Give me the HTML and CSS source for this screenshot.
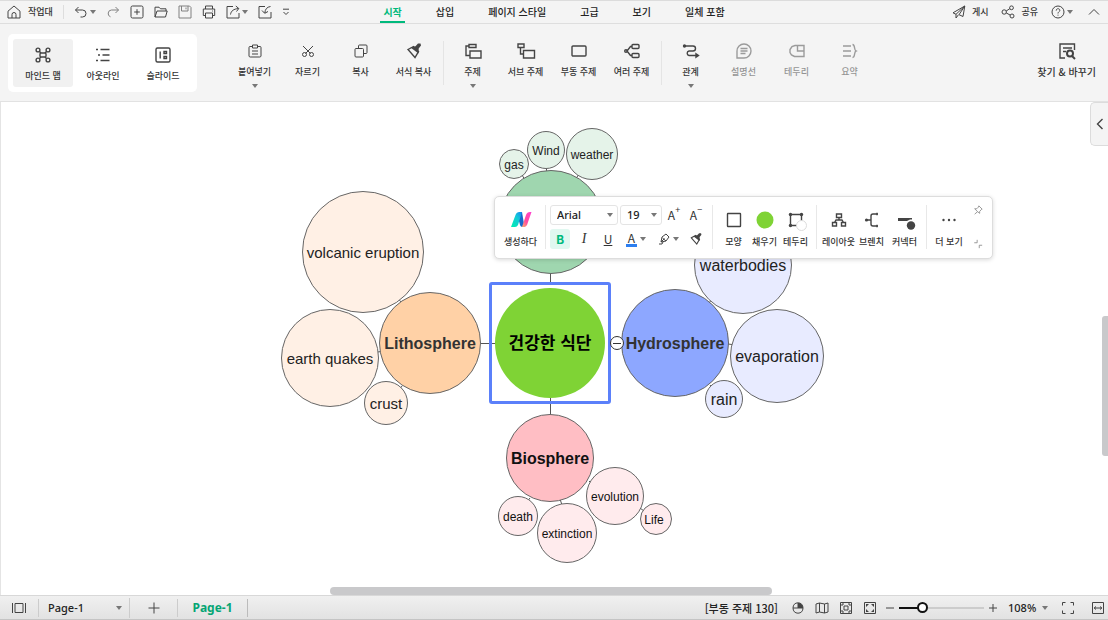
FILE: index.html
```html
<!DOCTYPE html>
<html lang="ko">
<head>
<meta charset="utf-8">
<meta name="viewport" content="width=device-width, initial-scale=1">
<title>마인드 맵</title>
<link rel="stylesheet" href="styles.css">
</head>
<body>
<header class="topbar">
  <div class="quick">
    <button class="home"><svg class="i14" viewBox="0 0 14 14"><path d="M1 6.2 7 1l6 5.2V13H1zM5 13V9.500a2 2 0 0 1 4 0V13"/></svg>작업대</button>
    <span class="bar-sep"></span>
    <button class="caret-btn" aria-label="실행 취소"><svg class="i14" viewBox="0 0 14 14"><path d="M4.500 2 1.500 5l3 3M1.500 5h7a3.500 3.500 0 0 1 0 7H6.500"/></svg><span class="caret"></span></button>
    <button class="faded" aria-label="다시 실행"><svg class="i14" viewBox="0 0 14 14"><path d="M9.500 2l3 3-3 3M12.500 5h-7a3.500 3.500 0 0 0-1 6.800"/></svg></button>
    <button aria-label="새로 만들기"><svg class="i14" viewBox="0 0 14 14"><rect x="1" y="1" width="12" height="12" rx="1.500"/><path d="M7 4.200v5.600M4.200 7h5.600"/></svg></button>
    <button aria-label="열기"><svg class="i14" viewBox="0 0 14 14"><path d="M1 12V2.200h4l1.500 1.600H12V6M1 12 3 6h10.200L11.500 12z"/></svg></button>
    <button class="faded" aria-label="저장"><svg class="i14" viewBox="0 0 14 14"><path d="M1 1h10.500L13 2.500V13H1zM3.500 1v5h6.500V1M8 2.500v1.800"/></svg></button>
    <button aria-label="인쇄"><svg class="i14" viewBox="0 0 14 14"><path d="M3.500 4V1h7v3M3.500 10.500H1.300V4h11.400v6.500h-2.200M3.500 8h7v5h-7zM10.200 6h.8"/></svg></button>
    <button class="caret-btn" aria-label="내보내기"><svg class="i14" viewBox="0 0 14 14"><path d="M7 1.500H1V13h12V8M4.500 9.500C5 6 7.500 4 12.500 3.500M9.800 1l3 2.500-2.300 3"/></svg><span class="caret"></span></button>
    <button aria-label="가져오기"><svg class="i14" viewBox="0 0 14 14"><path d="M7 1.500H1V13h12V7M12.500 1.500C9 2 7.200 4 6.800 8M4 5.500 6.700 8.300 10 6.500"/></svg></button>
    <button aria-label="더 보기"><svg class="i8" viewBox="0 0 8 8"><path d="M1 1.200h6M1.500 4 4 6.500 6.500 4"/></svg></button>
  </div>
  <nav class="tabs">
    <button class="tab active">시작</button><button class="tab">삽입</button><button class="tab">페이지 스타일</button><button class="tab">고급</button><button class="tab">보기</button><button class="tab">일체 포함</button>
  </nav>
  <div class="account">
    <button class="wide"><svg class="i14" viewBox="0 0 14 14"><path d="M12.800 1 1 7.800l3 1.500zM12.800 1l-1.800 10.500-4-1.800zM4 9.300V13l2.500-3.300"/></svg>게시</button>
    <button class="wide"><svg class="i14" viewBox="0 0 14 14"><circle cx="3.200" cy="7" r="2.200"/><circle cx="10.500" cy="2.800" r="1.900"/><circle cx="11" cy="11" r="2"/><path d="M5.200 6 8.800 3.700M5.200 7.900l4 2.200"/></svg>공유</button>
    <button class="caret-btn help" aria-label="도움말"><svg class="i14" viewBox="0 0 14 14"><circle cx="7" cy="7" r="6"/><path d="M5.200 5.600C5.200 3 9 3.200 8.800 5.500 8.700 6.800 7 6.800 7 8.500M7 9.700v.9"/></svg><span class="caret"></span></button>
    <button aria-label="접기"><svg class="i12" viewBox="0 0 12 12"><path d="M1 8.500 6 3.500l5 5"/></svg></button>
  </div>
</header>

<section class="ribbon">
  <div class="views">
    <button class="view active"><svg class="i18" viewBox="0 0 18 18"><g class="bold"><rect x="6" y="7" width="6" height="4" rx="1"/><circle cx="4" cy="4" r="1.900"/><circle cx="14" cy="4" r="1.900"/><circle cx="4" cy="14" r="1.900"/><circle cx="14" cy="14" r="1.900"/><path d="M5.500 5.500 7 7M12.500 5.500 11 7M5.500 12.500 7 11M12.500 12.500 11 11"/></g></svg>마인드 맵</button>
    <button class="view"><svg class="i18" viewBox="0 0 18 18"><path class="bold" d="M2 3.500h2M6.500 3.500h9M4 9h2M8.500 9h7M2 14.500h2M6.500 14.500h9"/></svg>아웃라인</button>
    <button class="view"><svg class="i18" viewBox="0 0 18 18"><g class="bold"><rect x="2" y="2" width="14" height="14" rx="1.500"/><path d="M6.200 5.500v7M10 5.500h2.500v2H10zM10 10.500h2.500v2H10z"/></g></svg>슬라이드</button>
  </div>
  <div class="tools">
    <button class="tool"><svg class="i18" viewBox="0 0 18 18"><path d="M6.500 4.500H4A1 1 0 0 0 3 5.500v8.500A1.200 1.200 0 0 0 4.200 15h9.600a1.200 1.200 0 0 0 1.200-1V5.500a1 1 0 0 0-1-1h-2.500M6.500 3h5v3h-5zM6 9h6M6 12h6"/></svg>붙여넣기<span class="caret"></span></button>
    <button class="tool"><svg class="i18" viewBox="0 0 18 18"><path d="M4 4l7.500 7.500M14 4 6.500 11.500"/><circle cx="5.500" cy="12.500" r="2"/><circle cx="12.500" cy="12.500" r="2"/></svg>자르기</button>
    <button class="tool"><svg class="i18" viewBox="0 0 18 18"><rect x="3" y="6.500" width="8.500" height="8.500" rx="1"/><path d="M6.500 6.500V4a1 1 0 0 1 1-1H14a1 1 0 0 1 1 1v6.500a1 1 0 0 1-1 1h-2.500"/></svg>복사</button>
    <button class="tool"><svg class="i18" viewBox="0 0 18 18"><path class="bold" d="M3 7.500 8.500 4.500l5 5L10 15.500z"/><path class="solid" d="m5.500 5.500 5-1.200 2.500-2.800h2.500l.5 2-2.300 3-.2 5z"/></svg>서식 복사</button>
  </div>
  <span class="tool-sep"></span>
  <div class="tools">
    <button class="tool"><svg class="i18" viewBox="0 0 18 18"><path class="bold" d="M5 2.500h7v3H5zM6 9h11v7H6zM5 4H2v9.500h4"/></svg>주제<span class="caret"></span></button>
    <button class="tool"><svg class="i18" viewBox="0 0 18 18"><path class="bold" d="M1 2h6v3.500H1zM6.500 8.500h11V16h-11zM3.500 5.500V12h3"/></svg>서브 주제</button>
    <button class="tool"><svg class="i18" viewBox="0 0 18 18"><rect class="bold" x="2" y="4" width="14" height="10" rx="1"/></svg>부동 주제</button>
    <button class="tool"><svg class="i18" viewBox="0 0 18 18"><g class="bold"><rect x="9" y="2.500" width="7" height="4" rx="1"/><rect x="9" y="11.500" width="7" height="4" rx="1"/><circle cx="3" cy="9" r="1.300"/><path d="M9 4.500H7.500L4 9l3.500 4.500H9"/></g></svg>여러 주제</button>
  </div>
  <span class="tool-sep"></span>
  <div class="tools">
    <button class="tool"><svg class="i18" viewBox="0 0 18 18"><path class="bold" d="M2 4h9a2.300 2.300 0 0 1 0 5H7a2.300 2.300 0 0 0 0 4.500h9M14 11.800l2.500 1.700-2.500 1.700z"/><circle class="solid" cx="2.500" cy="4" r="1.700"/></svg>관계<span class="caret"></span></button>
    <button class="tool" disabled><svg class="i18" viewBox="0 0 18 18"><path class="bold" d="M2 16V9a7 7 0 1 1 7 7zM5.500 6.500h7M5.500 9h7M5.500 11.500h5"/></svg>설명선</button>
    <button class="tool" disabled><svg class="i18" viewBox="0 0 18 18"><path class="bold" d="M7 3.500h9v11H6.500L3.500 13 2 10.500v-3L4 4.500zM9.500 3.500v5.500H16"/></svg>테두리</button>
    <button class="tool" disabled><svg class="i18" viewBox="0 0 18 18"><path class="bold" d="M2 4h8M2 9h8M2 14h8M11.500 2.500c3 0 1.200 5.500 3.500 6.500-2.300 1-.5 6.500-3.500 6.500"/></svg>요약</button>
  </div>
  <button class="tool find"><svg class="i18" viewBox="0 0 18 18"><path class="bold" d="M7 16H2V2h14.500v6M5 6h9M5 9.500h3"/><circle class="heavy" cx="12" cy="11.500" r="3"/><path class="heavy" d="m14 14 3 3"/></svg>찾기 &amp; 바꾸기</button>
</section>

<main class="canvas">
  <svg class="links" width="1108" height="493"><path d="M550.500 171v9M550.500 302v10M481 241.500h8M550.500 171v12M611 241.500h8M481 241.500h15M550.500 296v16M395 193l12 14M378 250l3-.5M402 284l-7 10M522 73l3 5M546.500 64v5M579 72l-4 6M709 201l7-9M728 242l4 .5M710 283l4 5M530 396l-4 5M560 397l2 6M589 379l3 3M640 406l4 3"/></svg>
  <div class="node n-volcanic peach">volcanic eruption</div>
  <div class="node n-earth peach">earth quakes</div>
  <div class="node n-crust peach">crust</div>
  <div class="node n-litho hub">Lithosphere</div>
  <div class="node n-gas mint">gas</div>
  <div class="node n-wind mint">Wind</div>
  <div class="node n-weather mint">weather</div>
  <div class="node n-atmo"></div>
  <div class="node n-water lilac">waterbodies</div>
  <div class="node n-evap lilac">evaporation</div>
  <div class="node n-rain lilac">rain</div>
  <div class="node n-hydro hub">Hydrosphere</div>
  <div class="node n-death pink">death</div>
  <div class="node n-extinct pink">extinction</div>
  <div class="node n-evol pink">evolution</div>
  <div class="node n-life pink">Life</div>
  <div class="node n-bio hub">Biosphere</div>
  <div class="selection"><div class="center-topic">건강한 식단</div></div>
  <button class="collapse" aria-label="하위 주제 접기"></button>

  <div class="float">
    <button class="fitem ai"><svg width="22" height="18" viewBox="0 0 22 18"><defs><linearGradient id="teal" x1="0" y1="1" x2="1" y2="0"><stop offset="0" stop-color="#00f0b0"/><stop offset=".6" stop-color="#12c8d8"/><stop offset="1" stop-color="#1684f5"/></linearGradient><linearGradient id="rose" x1="1" y1="0" x2="0" y2="1"><stop offset="0" stop-color="#ff3fd0"/><stop offset=".6" stop-color="#ff4d9d"/><stop offset="1" stop-color="#ffb36b"/></linearGradient></defs><path fill="#1668cc" d="M9 1h3l2.500 15h-2q-2 0-2.500-2L8 6z"/><path fill="url(#teal)" d="M1 16 5.500 4q1-3 4-3H12L8 14q-1 2-3 2z"/><path fill="url(#rose)" d="M12 16 16 4q1-3 4-3h1.500L17 14q-1 2-3 2z"/></svg>생성하다</button>
    <span class="fsep"></span>
    <div class="format">
      <div class="frow">
        <span class="pick family"><select aria-label="글꼴"><option>Arial</option></select></span>
        <span class="pick size"><select aria-label="글꼴 크기"><option>19</option></select></span>
        <button class="fbtn letter">A<sup>+</sup></button>
        <button class="fbtn letter">A<sup>−</sup></button>
      </div>
      <div class="frow second">
        <button class="fbtn on"><b>B</b></button>
        <button class="fbtn"><i>I</i></button>
        <button class="fbtn"><u>U</u></button>
        <button class="fbtn more"><span class="ink">A</span><span class="caret"></span></button>
        <button class="fbtn more" aria-label="강조 색"><svg class="i12" viewBox="0 0 12 12"><path d="M1 11h3l1-2M3 9l1-5 4-3 3 3-3 4-5 1zM3 9l3.500-3.500M4.500 5 8 8"/></svg><span class="caret"></span></button>
        <button class="fbtn" aria-label="서식 복사"><svg class="i14" viewBox="0 0 18 18"><path class="bold" d="M3 7.500 8.500 4.500l5 5L10 15.500z"/><path class="solid" d="m5.500 5.500 5-1.200 2.500-2.800h2.500l.5 2-2.300 3-.2 5z"/></svg></button>
      </div>
    </div>
    <span class="fsep"></span>
    <div class="fgroup">
      <button class="fitem"><svg class="i18" viewBox="0 0 18 18"><rect class="bold" x="2.500" y="2.500" width="13" height="13" rx=".5"/></svg>모양</button>
      <button class="fitem"><svg class="i18" viewBox="0 0 18 18"><circle cx="9" cy="9" r="8.500" class="fill-dot"/></svg>채우기</button>
      <button class="fitem"><svg class="i18" viewBox="0 0 18 18"><path class="bold" d="M3.500 3.500h11v11h-11z"/><g class="solid"><circle cx="3.500" cy="3.500" r="1.700"/><circle cx="14.500" cy="3.500" r="1.700"/><circle cx="3.500" cy="14.500" r="1.700"/></g><circle cx="14.500" cy="14.500" r="5" class="blank-dot"/></svg>테두리</button>
    </div>
    <span class="fsep"></span>
    <div class="fgroup broad">
      <button class="fitem"><svg class="i18" viewBox="0 0 18 18"><path class="bold" d="M6.500 3h5v3.500h-5zM2.500 11.500h4V15h-4zM11.500 11.500h4V15h-4zM9 6.500V9M4.500 11.500 6 9h6l1.500 2.500"/></svg>레이아웃</button>
      <button class="fitem"><svg class="i18" viewBox="0 0 18 18"><path class="bold" d="M3 9h5M15 3h-5Q8 3 8 5v8q0 2 2 2h5M14 1.800v2.400M14 13.800v2.400"/><circle class="solid" cx="3.500" cy="9" r="1.600"/></svg>브렌치</button>
      <button class="fitem"><svg class="i18" viewBox="0 0 18 18"><path class="thick" d="M2 8.500h9"/><path class="solid" d="M11 7h5v1.500h-2L11 10z"/><circle class="solid" cx="15" cy="14.500" r="4.200"/></svg>커넥터</button>
    </div>
    <span class="fsep"></span>
    <button class="fitem dots"><svg class="i18" viewBox="0 0 18 18"><g class="solid"><circle cx="3.500" cy="9" r="1.200"/><circle cx="9" cy="9" r="1.200"/><circle cx="14.500" cy="9" r="1.200"/></g></svg>더 보기</button>
    <div class="corner">
      <button aria-label="고정"><svg class="i10" viewBox="0 0 12 12"><path d="m7 1 4 4-1 .5-2 2.200L8 10 5.500 8 2 11M7 1l-.5 1.500L4.500 4.500 2 4.500 5.500 8"/></svg></button>
      <button aria-label="축소"><svg class="i10" viewBox="0 0 12 12"><path d="M5 1v3.500H1.500M7.500 11V7.500H11"/></svg></button>
    </div>
  </div>

  <button class="side-toggle" aria-label="패널 열기"><svg class="i12" viewBox="0 0 12 12"><path class="bold" d="M8.500 1 3.500 6l5 5"/></svg></button>
  <span class="scroll-h"></span>
  <span class="scroll-v"></span>
</main>

<footer class="status">
  <button class="pages" aria-label="페이지 목록"><svg class="i14" viewBox="0 0 14 14"><path d="M.5 2v10M13.500 2v10M3 2.500h8v9H3z"/></svg></button>
  <span class="pick page"><select aria-label="페이지"><option>Page-1</option></select></span>
  <button class="add" aria-label="페이지 추가"><svg class="i12" viewBox="0 0 12 12"><path d="M6 .5v11M.5 6h11"/></svg></button>
  <button class="sheet">Page-1</button>
  <div class="status-right">
    <span class="info">[부동 주제 130]</span>
    <button class="sbtn" aria-label="마우스"><svg class="i12" viewBox="0 0 12 12"><path d="M6 .8c3 0 5 2 5 5.200s-2 5.200-5 5.200S1 9.200 1 6 3 .8 6 .8zM1 6h10M6 1v5"/><path class="solid" d="M6 1c3 0 5 2 5 5H6z"/></svg></button>
    <button class="sbtn" aria-label="지도"><svg class="i14" viewBox="0 0 14 14"><path d="m1 3 3.500-1 5 1L13 2v9l-3.500 1-5-1L1 12zM4.500 2v9M9.500 3v9"/></svg></button>
    <button class="sbtn" aria-label="페이지 맞춤"><svg class="i14" viewBox="0 0 14 14"><path d="M1.500 1.500h11v11h-11zM5 5h4v4H5zM3 5V3h2M9 3h2v2M11 9v2H9M5 11H3V9"/></svg></button>
    <button class="sbtn" aria-label="모두 맞춤"><svg class="i14" viewBox="0 0 14 14"><path d="M1.500 1.500h11v11h-11z"/><path class="solid" d="M3 3h3L3 6zM11 3v3L8 3zM11 11H8l3-3zM3 11V8l3 3z"/></svg></button>
    <div class="zoom">
      <button aria-label="축소"><svg class="i10" viewBox="0 0 10 10"><path d="M1 5h8"/></svg></button>
      <input type="range" min="0" max="100" value="24" aria-label="확대 비율">
      <button aria-label="확대"><svg class="i10" viewBox="0 0 10 10"><path d="M1 5h8M5 1v8"/></svg></button>
    </div>
    <span class="pick percent"><select aria-label="배율"><option>108%</option></select></span>
    <button class="sbtn full" aria-label="전체 화면"><svg class="i14" viewBox="0 0 14 14"><path d="M1.500 4.500v-3h3M9.500 1.500h3v3M12.500 9.500v3h-3M4.500 12.500h-3v-3"/></svg></button>
    <button class="sbtn" aria-label="너비 맞춤"><svg class="i12" viewBox="0 0 12 12"><path d="M.5.500h11v11H.5zM2 6h8M4 4.500 2.200 6 4 7.500M8 4.500 9.800 6 8 7.500"/></svg></button>
  </div>
</footer>
</body>
</html>
```
FILE: styles.css
```css
* { box-sizing: border-box; }
html, body { height: 100%; }
body {
  margin: 0;
  display: flex;
  flex-direction: column;
  overflow: hidden;
  font: 500 9px/14px "Noto Sans CJK KR", sans-serif;
  color: #333;
  background: #fff;
}
button, select { font: inherit; color: inherit; background: none; border: 0; padding: 0; margin: 0; }
button { display: flex; align-items: center; justify-content: center; white-space: nowrap; }
svg { display: block; flex: none; fill: none; stroke: #444; stroke-width: 1; overflow: visible; }
.i8 { width: 8px; height: 8px; }
.i10 { width: 10px; height: 10px; }
.i12 { width: 12px; height: 12px; }
.i14 { width: 14px; height: 14px; }
.i18 { width: 18px; height: 18px; }
.bold { stroke-width: 1.4; }
.heavy { stroke-width: 2; }
.thick { stroke-width: 3; }
.solid { fill: #444; stroke: none; }
.caret { border: 3px solid transparent; border-top: 4px solid #777; border-bottom: 0; }

/* Title bar */
.topbar {
  flex: none;
  display: grid;
  grid-template-columns: 1fr auto 1fr;
  height: 24px;
  background: #f4f4f4;
  border-top: 1px solid #dcdcdc;
  border-bottom: 1px solid #dedede;
}
.quick, .account { display: flex; align-items: center; gap: 10px; }
.quick { padding-left: 7px; }
.home { gap: 7px; }
.bar-sep { width: 1px; height: 14px; background: #ddd; }
.caret-btn { gap: 2px; }
.faded { opacity: .65; }
.account { justify-content: flex-end; padding-right: 8px; gap: 13px; }
.wide { gap: 6px; }
.help { margin-right: 2px; }
.tabs { display: flex; gap: 28px; }
.tab { font-size: 10px; padding: 0 3px; border-bottom: 2px solid transparent; border-top: 2px solid transparent; color: #222; }
.tab.active { color: #00b97c; font-weight: 700; border-bottom-color: #00b97c; }

/* Ribbon */
.ribbon {
  flex: none;
  display: flex;
  align-items: flex-start;
  height: 78px;
  padding: 10px 12px 0 8px;
  background: #f4f4f4;
  border-bottom: 1px solid #e2e2e2;
}
.views { display: flex; padding: 5px 4px 5px 5px; margin-right: 31px; background: #fff; border-radius: 5px; }
.view { flex-direction: column; width: 60px; height: 48px; gap: 5px; border-radius: 3px; padding-top: 2px; }
.view.active { background: #f1f1f1; }
.tools { display: flex; align-items: flex-start; }
.tool { flex-direction: column; width: 53px; padding-top: 8px; }
.tool svg { margin-bottom: 5px; }
.tool .caret { margin-top: 5px; }
.tool:disabled { opacity: .5; color: inherit; }
.tool-sep { width: 1px; height: 44px; margin: 7px 2px 0 3px; background: #e4e4e4; }
.find { width: auto; margin-left: auto; font-size: 10px; }

/* Map canvas */
.canvas { position: relative; flex: 1; min-height: 0; overflow: hidden; background: #fff; border-left: 1px solid #e4e4e4; font-family: "Liberation Sans", Arial, sans-serif; }
.links { position: absolute; left: -1px; top: 0; stroke: #555; }
.node {
  position: absolute;
  display: flex;
  align-items: center;
  justify-content: center;
  transform: translate(-50%, -50%);
  border: 1px solid #666;
  border-radius: 50%;
  aspect-ratio: 1;
  padding-top: 1px;
  font-size: 12px;
  font-weight: 400;
  white-space: nowrap;
  color: #222;
}
.hub { font-size: 16px; font-weight: 700; }
.peach { background: #fff0e5; font-size: 15px; }
.mint { background: #e5f3e9; }
.lilac { background: #e8ebff; font-size: 16px; }
.pink { background: #ffebed; color: #111; }
.n-volcanic { left: 362px; top: 150px; width: 122px; }
.n-earth { left: 329px; top: 256px; width: 98px; }
.n-crust { left: 385px; top: 301px; width: 44px; }
.n-litho { left: 429px; top: 241px; width: 102px; background: #ffd1a6; color: #333; }
.n-gas { left: 513px; top: 62px; width: 30px; }
.n-wind { left: 545px; top: 48px; width: 38px; }
.n-weather { left: 591px; top: 52px; width: 52px; }
.n-atmo { left: 550px; top: 120px; width: 104px; background: #9fd6af; }
.n-water { left: 742px; top: 163px; width: 98px; }
.n-evap { left: 776px; top: 254px; width: 94px; }
.n-rain { left: 723px; top: 297px; width: 38px; }
.n-hydro { left: 674px; top: 241px; width: 108px; background: #8da7ff; color: #333; }
.n-death { left: 517px; top: 414px; width: 40px; }
.n-extinct { left: 566px; top: 431px; width: 60px; }
.n-evol { left: 614px; top: 394px; width: 58px; }
.n-life { left: 655px; top: 417px; width: 32px; padding-right: 4px; }
.n-bio { left: 549px; top: 356px; width: 88px; background: #ffbec4; color: #111; }
.selection {
  position: absolute;
  left: 488px;
  top: 180px;
  padding: 3px;
  border: 3px solid #5b80fa;
  border-radius: 3px;
}
.center-topic {
  display: flex;
  align-items: center;
  justify-content: center;
  width: 110px;
  height: 110px;
  padding-bottom: 2px;
  border-radius: 50%;
  background: #7fd335;
  color: #000;
  font: 700 17px/24px "Noto Sans CJK KR", sans-serif;
}
.collapse { position: absolute; left: 609px; top: 234px; width: 14px; height: 14px; background: #fff; border: 1px solid #333; border-radius: 50%; }
.collapse::before { content: ""; width: 8px; height: 1px; background: #333; }

/* Floating format bar */
.float {
  position: absolute;
  left: 493px;
  top: 94px;
  display: flex;
  align-items: flex-start;
  height: 63px;
  padding: 8px 9px 0 5px;
  background: #fff;
  border: 1px solid #ddd;
  border-radius: 5px;
  box-shadow: 0 1px 4px rgba(0, 0, 0, .15);
  font-family: "Noto Sans CJK KR", sans-serif;
}
.fsep { width: 1px; height: 44px; background: #e8e8e8; }
.fitem { flex-direction: column; gap: 6px; width: 31px; padding-top: 6px; }
.fitem.ai { width: 41px; margin-right: 4px; }
.fitem.ai svg { stroke: none; }
.fitem.dots { width: 44px; }
.fgroup { display: flex; justify-content: space-between; padding: 0 5px; }
.broad .fitem { width: 33px; }
.format { width: 166px; padding-left: 4px; }
.frow { display: flex; align-items: center; gap: 2px; height: 20px; font-size: 11px; }
.frow.second { margin-top: 4px; gap: 4px; }
.fbtn { width: 20px; height: 20px; font-size: 12px; font-weight: 400; border-radius: 3px; }
.fbtn.on { background: #e0f8f0; color: #00b97c; }
.fbtn.more { width: 28px; gap: 3px; }
.fbtn i { font-family: "Liberation Serif", serif; font-size: 14px; }
.letter sup { font-size: 9px; line-height: 10px; align-self: flex-start; }
.ink { line-height: 12px; border-bottom: 3px solid #2d7ff0; padding: 0 2px; }
.fill-dot { fill: #7fd335; stroke: none; }
.blank-dot { fill: #fff; stroke: #ddd; }
.corner { display: flex; flex-direction: column; gap: 24px; margin-left: 2px; }
.corner svg { stroke: #888; }

.pick { display: inline-grid; align-items: center; }
.pick select { grid-area: 1 / 1; appearance: none; width: 100%; height: 100%; color: #222; outline: 0; }
.pick::after { content: ""; grid-area: 1 / 1; justify-self: end; margin-right: 4px; border: 3px solid transparent; border-top: 4px solid #777; border-bottom: 0; pointer-events: none; }
.family, .size { height: 20px; border: 1px solid #e4e4e4; border-radius: 3px; font-family: "Noto Sans", sans-serif; }
.family { width: 68px; }
.size { width: 42px; }
.family select, .size select { padding-left: 6px; }

.side-toggle { position: absolute; right: 0; top: 0; width: 18px; height: 44px; background: #f4f4f4; border: 1px solid #dcdcdc; border-right: 0; border-radius: 5px 0 0 5px; }
.scroll-h { position: absolute; left: 329px; right: 336px; bottom: 0; height: 8px; background: #c9c9cb; border-radius: 4px; }
.scroll-v { position: absolute; right: 0; top: 214px; width: 6px; height: 140px; background: #c9c9cb; border-radius: 3px 0 0 3px; }

/* Status bar */
.status {
  flex: none;
  display: flex;
  align-items: center;
  height: 25px;
  background: linear-gradient(#f0f0f0, #e2e2e2);
  border-top: 1px solid #d8d8d8;
  border-bottom: 1px solid #c4c4c4;
  font: 500 11px/16px "Noto Sans", "Noto Sans CJK KR", sans-serif;
  color: #222;
}
.pages { width: 39px; height: 18px; border-right: 1px solid #ccc; }
.page { width: 91px; height: 20px; border-right: 1px solid #ccc; }
.page select { padding-left: 9px; }
.page::after { margin-right: 7px; }
.add { width: 48px; height: 18px; border-right: 1px solid #ccc; }
.sheet { width: 70px; height: 18px; border-right: 1px solid #bbb; color: #05a574; font-size: 12px; font-weight: 700; }
.status-right { display: flex; align-items: center; margin-left: auto; padding-right: 4px; }
.info { font-family: "Noto Sans CJK KR", sans-serif; margin-right: 8px; }
.sbtn { width: 24px; }
.sbtn:last-child { width: 12px; }
.full { margin-right: 12px; }
.zoom { display: flex; align-items: center; gap: 4px; margin-left: 3px; }
.zoom input { appearance: none; width: 85px; height: 12px; margin: 0; background: linear-gradient(90deg, #111 24%, #ccc 24%) center / 100% 2px no-repeat; }
.zoom input::-webkit-slider-thumb { appearance: none; width: 11px; height: 11px; border: 2px solid #111; border-radius: 50%; background: #fff; }
.percent { width: 43px; height: 20px; margin-left: 7px; margin-right: 8px; }
.percent select { padding-left: 3px; }
.percent::after { margin-right: 0; }
```
